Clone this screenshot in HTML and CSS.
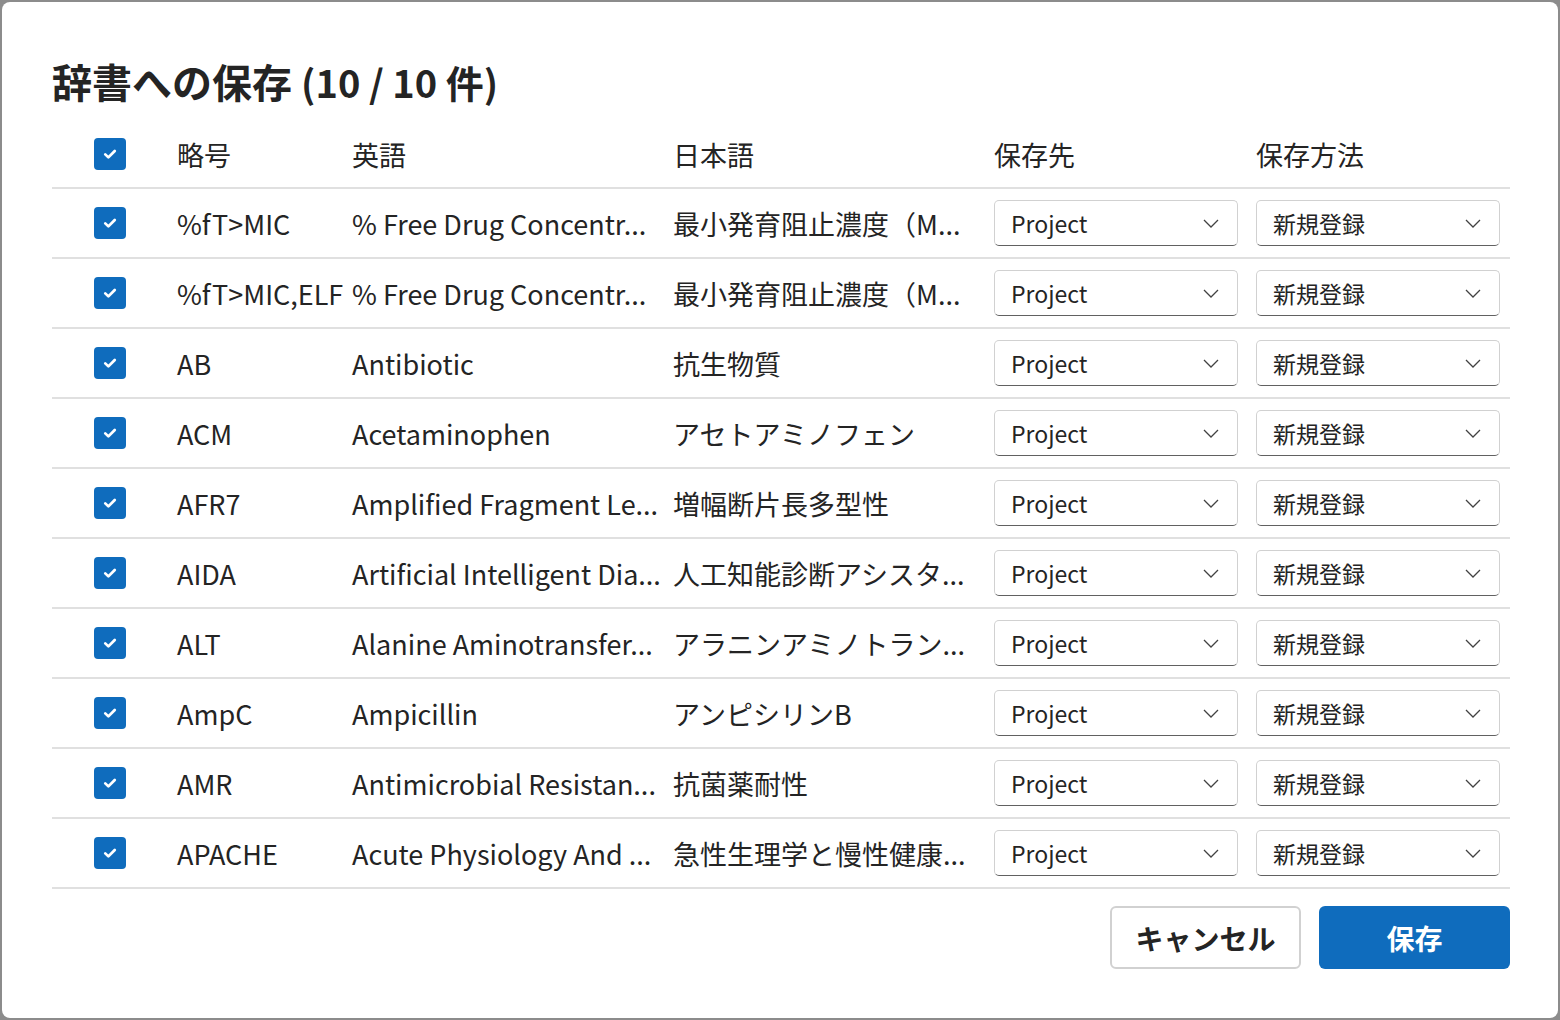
FILE: index.html
```html
<!DOCTYPE html>
<html lang="ja">
<head>
    <meta charset="UTF-8">
    <meta name="viewport" content="width=device-width, initial-scale=1.0">
    <title>辞書への保存</title>
    <link rel="stylesheet" href="styles.css">
</head>
<body>
    <div class="dialog">
        <h1 class="dialog-title">辞書への保存 <span class="count">(10 / 10 件)</span></h1>

        <table class="terms">
            <colgroup>
                <col class="col-check">
                <col class="col-abbr">
                <col class="col-en">
                <col class="col-ja">
                <col class="col-target">
                <col class="col-method">
            </colgroup>
            <thead>
                <tr>
                    <th class="cell-check"><span class="checkbox"><svg viewBox="0 0 16 16"><path d="M4.2 8.3l2.5 2.4L11.8 5.6"/></svg></span></th>
                    <th>略号</th>
                    <th>英語</th>
                    <th>日本語</th>
                    <th>保存先</th>
                    <th>保存方法</th>
                </tr>
            </thead>
            <tbody id="rows"></tbody>
        </table>

        <div class="dialog-actions">
            <button class="btn btn-secondary">キャンセル</button>
            <button class="btn btn-primary">保存</button>
        </div>
    </div>

    <script>
        // long names are already cut to the column width
        const terms = [
            ['%fT>MIC', '% Free Drug Concentr...', '最小発育阻止濃度（M...'],
            ['%fT>MIC,ELF', '% Free Drug Concentr...', '最小発育阻止濃度（M...'],
            ['AB', 'Antibiotic', '抗生物質'],
            ['ACM', 'Acetaminophen', 'アセトアミノフェン'],
            ['AFR7', 'Amplified Fragment Le...', '増幅断片長多型性'],
            ['AIDA', 'Artificial Intelligent Dia...', '人工知能診断アシスタ...'],
            ['ALT', 'Alanine Aminotransfer...', 'アラニンアミノトラン...'],
            ['AmpC', 'Ampicillin', 'アンピシリンB'],
            ['AMR', 'Antimicrobial Resistan...', '抗菌薬耐性'],
            ['APACHE', 'Acute Physiology And ...', '急性生理学と慢性健康...']
        ];

        const check = '<span class="checkbox"><svg viewBox="0 0 16 16"><path d="M4.2 8.3l2.5 2.4L11.8 5.6"/></svg></span>';
        const chevron = '<svg class="chevron" viewBox="0 0 20 20"><path d="M3 7l7 7 7-7"/></svg>';
        const dropdown = (label) => `<div class="dropdown"><span>${label}</span>${chevron}</div>`;

        const esc = (s) => s.replace(/&/g, '&amp;').replace(/</g, '&lt;').replace(/>/g, '&gt;');

        document.getElementById('rows').innerHTML = terms.map(([abbr, en, ja]) => `
            <tr>
                <td class="cell-check">${check}</td>
                <td>${esc(abbr)}</td>
                <td>${esc(en)}</td>
                <td>${esc(ja)}</td>
                <td>${dropdown('Project')}</td>
                <td>${dropdown('新規登録')}</td>
            </tr>
        `).join('');
    </script>
</body>
</html>
```

FILE: styles.css
```css
html, body {
    height: 100%;
}

body {
    margin: 0;
    padding: 2px;
    box-sizing: border-box;
    background-color: #8c8c8c;
    font-family: "Noto Sans CJK JP", "Noto Sans", sans-serif;
    color: #242424;
}

.dialog {
    background-color: white;
    border-radius: 8px;
    height: 100%;
    box-sizing: border-box;
    padding: 52px 48px 0 50px;
}

.dialog-title {
    margin: 0 0 12px;
    font-size: 40px;
    font-weight: bold;
    line-height: 54px;
}

.dialog-title .count {
    font-weight: 600;
    font-size: 38px;
}

.terms {
    width: 100%;
    table-layout: fixed;
    border-collapse: collapse;
}

.col-check { width: 125px; }
.col-abbr { width: 175px; }
.col-en { width: 321px; }
.col-ja { width: 321px; }
.col-target { width: 262px; }
.col-method { width: 254px; }

.terms th,
.terms td {
    padding: 0;
    text-align: left;
    font-weight: normal;
    font-size: 27px;
    white-space: nowrap;
    border-bottom: 2px solid #e0e0e0;
}

.terms th {
    height: 66px;
}

.terms td {
    height: 68px;
}

.terms .cell-check {
    padding-left: 42px;
}

.checkbox {
    display: flex;
    align-items: center;
    justify-content: center;
    width: 32px;
    height: 32px;
    border-radius: 4px;
    background-color: #0f6cbd;
}

.checkbox svg {
    width: 20px;
    height: 20px;
    fill: none;
    stroke: white;
    stroke-width: 2.2;
    stroke-linecap: round;
    stroke-linejoin: round;
}

.dropdown {
    display: flex;
    align-items: center;
    justify-content: space-between;
    width: 244px;
    height: 46px;
    box-sizing: border-box;
    padding: 0 16px;
    border: 1px solid #d1d1d1;
    border-bottom-color: #616161;
    border-radius: 5px;
    font-size: 23px;
}

.chevron {
    width: 20px;
    height: 20px;
    fill: none;
    stroke: #424242;
    stroke-width: 1.3;
}

.dialog-actions {
    display: flex;
    justify-content: flex-end;
    gap: 18px;
    margin-top: 17px;
}

.btn {
    width: 191px;
    height: 63px;
    border-radius: 6px;
    font-family: inherit;
    font-size: 28px;
    font-weight: bold;
    cursor: pointer;
}

.btn-secondary {
    background-color: white;
    border: 2px solid #d1d1d1;
    color: #242424;
}

.btn-primary {
    background-color: #0f6cbd;
    border: none;
    color: white;
}
```
